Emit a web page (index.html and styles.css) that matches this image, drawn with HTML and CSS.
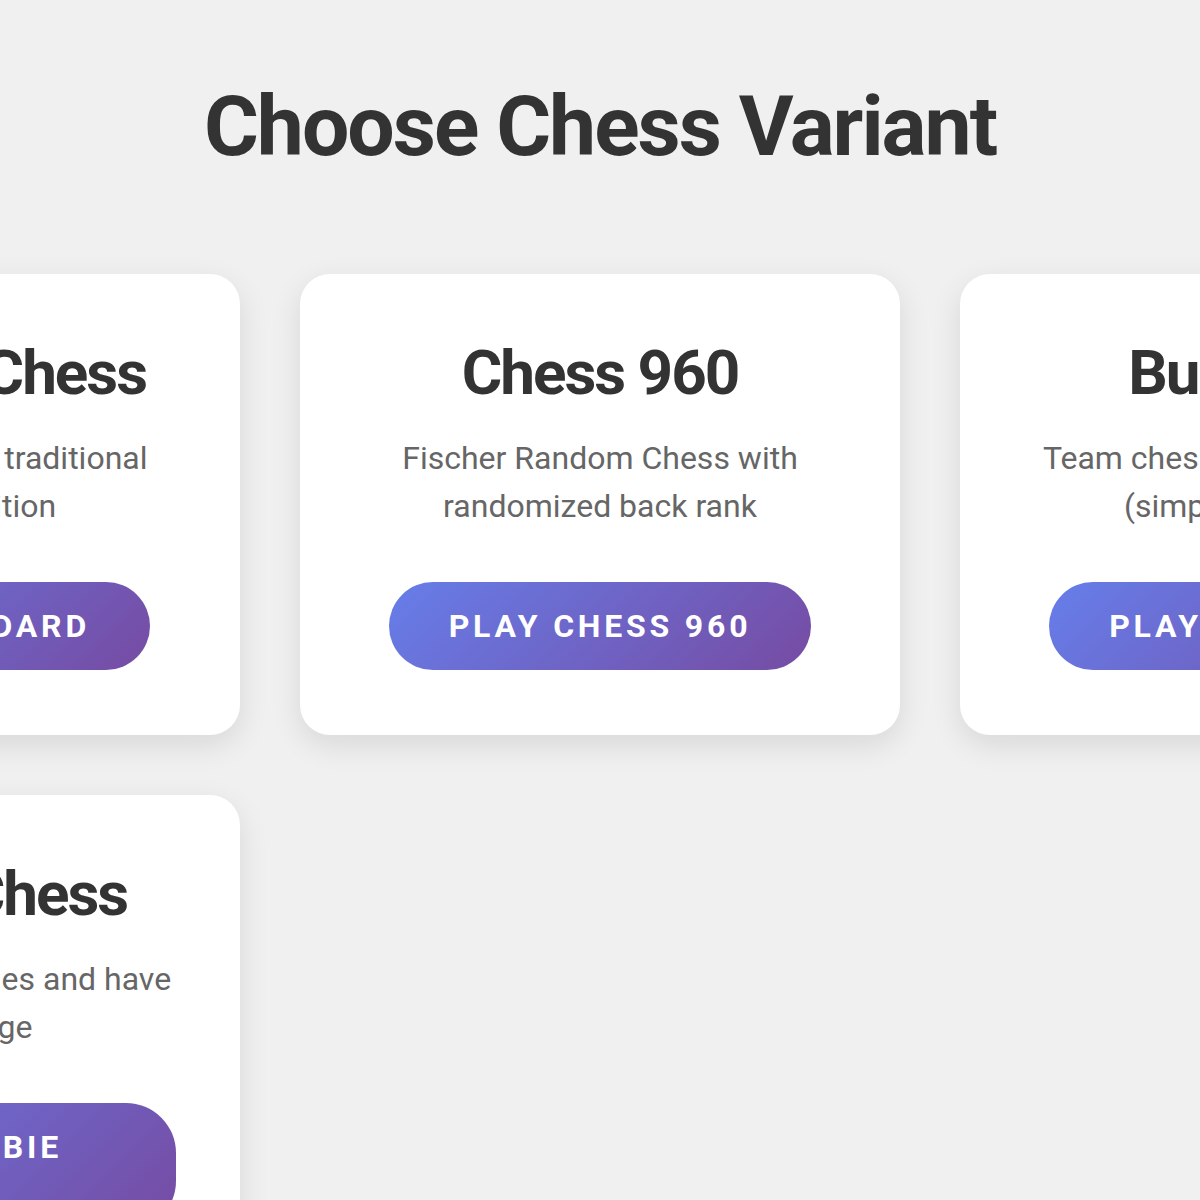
FILE: index.html
```html
<!DOCTYPE html>
<html lang="en">
<head>
    <meta charset="UTF-8">
    <meta name="viewport" content="width=device-width, initial-scale=1.0">
    <title>Choose Chess Variant</title>
    <link rel="stylesheet" href="styles.css">
</head>
<body>
    <div class="container">
        <h1 class="title">Choose Chess Variant</h1>
        <div class="variants">
            <div class="variant-card">
                <h2>Standard Chess</h2>
                <p>Classic chess with traditional starting position</p>
                <button class="play-button">Play Standard</button>
            </div>
            <div class="variant-card">
                <h2>Chess 960</h2>
                <p>Fischer Random Chess with randomized back rank</p>
                <button class="play-button">Play Chess 960</button>
            </div>
            <div class="variant-card">
                <h2>Bughouse</h2>
                <p>Team chess variant with drops (simplified version)</p>
                <button class="play-button">Play Bughouse</button>
            </div>
            <div class="variant-card">
                <h2>Zombie Chess</h2>
                <p>Pieces rise as zombies and have limited range</p>
                <button class="play-button">Play Zombie Chess</button>
            </div>
        </div>
    </div>
</body>
</html>
```

FILE: styles.css
```css
body {
    font-family: Roboto, "Noto Sans", sans-serif;
    background-color: #f0f0f0;
    margin: 0;
    padding: 0;
    overflow: hidden;
}
.container {
    padding: 77px 0 60px;
}
.title {
    font-size: 84px;
    font-weight: bold;
    letter-spacing: -2px;
    color: #333;
    text-align: center;
    margin: 0 0 98px;
    line-height: normal;
}
.variants {
    display: grid;
    grid-template-columns: repeat(3, 600px);
    gap: 60px;
    justify-content: center;
}
.variant-card {
    background: white;
    border-radius: 30px;
    padding: 62px 64px 65px;
    box-shadow: 0 10px 30px rgba(0, 0, 0, 0.1);
    display: flex;
    flex-direction: column;
    align-items: center;
    text-align: center;
}
.variant-card h2 {
    font-size: 62px;
    font-weight: bold;
    letter-spacing: -2px;
    color: #333;
    margin: 0 0 25px;
    line-height: normal;
}
.variant-card p {
    font-size: 32px;
    line-height: 48px;
    color: #666;
    margin: 0 0 52px;
}
.play-button {
    font-family: inherit;
    font-size: 32px;
    font-weight: bold;
    line-height: 40px;
    letter-spacing: 3.8px;
    text-transform: uppercase;
    color: white;
    background: linear-gradient(135deg, #667eea 0%, #764ba2 100%);
    border: none;
    border-radius: 50px;
    padding: 24px 60px;
    cursor: pointer;
}
```
